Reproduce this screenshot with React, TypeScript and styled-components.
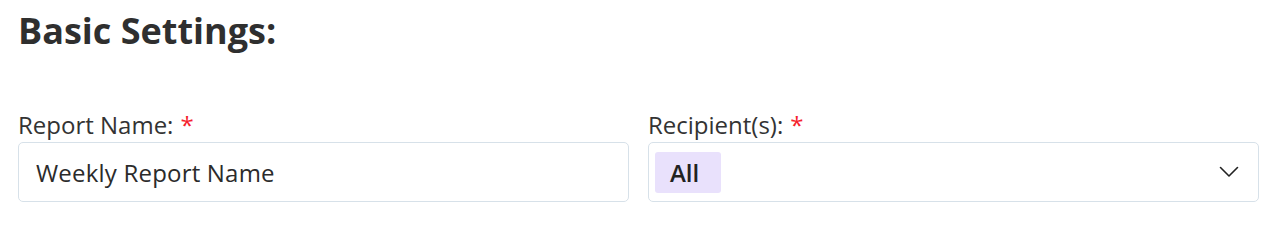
import * as React from 'react';
import styled, { createGlobalStyle } from 'styled-components';

const GlobalStyle = createGlobalStyle`
  html, body {
    margin: 0;
    padding: 0;
    background: #ffffff;
    font-family: 'Open Sans', 'Liberation Sans', sans-serif;
    color: #2b2b2b;
  }
`;

const Page = styled.div`
  padding: 7px 13px 0 18px;
`;

const Title = styled.h2`
  margin: 0;
  font-size: 36px;
  font-weight: 700;
  line-height: 48px;
  color: #2f2f2f;
`;

const Row = styled.div`
  display: grid;
  grid-template-columns: 1fr 1fr;
  column-gap: 19px;
  margin-top: 54px;
`;

const Field = styled.div`
  display: flex;
  flex-direction: column;
`;

const Label = styled.label`
  font-size: 24px;
  line-height: 32px;
  color: #333333;
  margin-bottom: 1px;
`;

const Required = styled.span`
  color: #f5222d;
  margin-left: 7px;
`;

const Box = styled.div`
  box-sizing: border-box;
  height: 60px;
  border: 1px solid #d7e1e9;
  border-radius: 5px;
  display: flex;
  align-items: center;
  background: #ffffff;
`;

const TextInput = styled.input`
  border: none;
  outline: none;
  background: transparent;
  width: 100%;
  padding: 0 17px;
  font-family: inherit;
  font-size: 24px;
  letter-spacing: 0.2px;
  color: #2b2b2b;
`;

const SelectBox = styled(Box)`
  padding: 0 19px 0 6px;
  justify-content: space-between;
`;

const Chip = styled.span`
  display: inline-flex;
  align-items: center;
  height: 41px;
  padding: 0 22px 0 15px;
  border-radius: 3px;
  background: #e9e1fc;
  font-size: 24px;
  font-weight: 600;
  color: #222222;
`;

const Chevron = () => (
  <svg width="20" height="12" viewBox="0 0 20 12" fill="none">
    <path d="M1.5 1.5L10 10L18.5 1.5" stroke="#222" strokeWidth="1.6" strokeLinecap="round" strokeLinejoin="round" />
  </svg>
);

export default function App() {
  return (
    <>
      <GlobalStyle />
      <Page>
        <Title>Basic Settings:</Title>
        <Row>
          <Field>
            <Label>
              Report Name:<Required>*</Required>
            </Label>
            <Box>
              <TextInput defaultValue="Weekly Report Name" />
            </Box>
          </Field>
          <Field>
            <Label>
              Recipient(s):<Required>*</Required>
            </Label>
            <SelectBox>
              <Chip>All</Chip>
              <Chevron />
            </SelectBox>
          </Field>
        </Row>
      </Page>
    </>
  );
}
